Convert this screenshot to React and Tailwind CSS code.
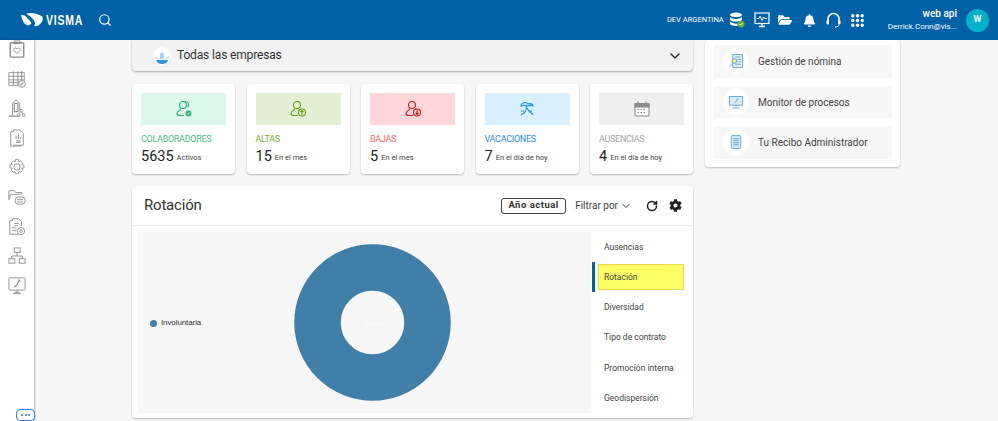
import React from "react";
import { ChevronDown, RotateCw, Search } from "lucide-react";
import { FaBell, FaCog, FaFolderOpen } from "react-icons/fa";

const Logo = () => (
  <svg width="22" height="14" viewBox="0 0 22 14" className="block">
    <path d="M0 2.500C2 1.500 4 2.500 5.500 4C7.500 6 9 8 10.500 10C9.500 12 7.500 13 5.500 12C2.500 10.500 1 6 0 2.500Z" fill="#fff" />
    <path d="M5 .8C9-.6 15 0 20.500 3C22.500 4.500 22 7 20.500 9.500C18.500 12.500 15.500 13.800 13 13C14.500 11.500 14.500 9.500 13 7.500C11 4.800 8 2.200 5 .8Z" fill="#fff" />
  </svg>
);

const Db = () => (
  <svg width="16" height="16" viewBox="0 0 16 16">
    <ellipse cx="7" cy="2.800" rx="6" ry="2.300" fill="#fff" />
    <path d="M1 5v2.400c0 1.200 2.700 2.200 6 2.200s6-1 6-2.200V5c-1 1.200-3.400 1.900-6 1.900S2 6.200 1 5Z" fill="#fff" />
    <path d="M1 9.300v2.500c0 1.200 2.700 2.200 6 2.200 .6 0 1 0 1.500-.1v-2.300c-3 .3-6.300-.5-7.500-2.300Z" fill="#fff" />
    <circle cx="12" cy="12" r="3.500" fill="#5fb233" />
    <path d="M10.500 12l1.100 1.100 2-2.100" fill="none" stroke="#fff" strokeWidth="1" />
  </svg>
);

const Pulse = () => (
  <svg width="16" height="16" viewBox="0 0 16 16" fill="none" stroke="#fff">
    <rect x="1" y="1" width="14" height="10.500" strokeWidth="1.200" />
    <path d="M2.500 6.500h2.500l1.200-2.500 1.800 4.500 1.500-3.500 1 1.500h2.500" strokeWidth=".9" />
    <path d="M5 14.500h6M8 11.500v3" strokeWidth="1.400" />
  </svg>
);

const Headset = () => (
  <svg width="15" height="16" viewBox="0 0 15 16" fill="none">
    <path d="M2 9V7a5.500 5.500 0 0 1 11 0v2" stroke="#fff" strokeWidth="1.500" />
    <rect x=".5" y="8" width="2.500" height="4.500" rx="1" fill="#fff" />
    <rect x="12" y="8" width="2.500" height="4.500" rx="1" fill="#fff" />
    <path d="M13 12.500c0 1.500-1.500 2.500-4 2.500" stroke="#fff" />
  </svg>
);

const AppsGrid = () => (
  <svg width="13" height="13" viewBox="0 0 13 13" fill="#fff">
    {[1.800, 6.500, 11.200].map((y) =>
      [1.800, 6.500, 11.200].map((x) => <circle key={`${x}-${y}`} cx={x} cy={y} r="1.700" />)
    )}
  </svg>
);

// gray line icons of the left rail
const railPaths = [
  <g key="a"><rect x="2.500" y="3" width="15" height="16" rx="1" strokeWidth="1.500" /><rect x="7" y="1" width="6" height="3" /><path d="M10 15l-3.500-3.500c-1-2 2-4 3.500-1.500 1.500-2.500 4.500-.5 3.500 1.500Z" /></g>,
  <g key="b"><rect x="1" y="3" width="17" height="14" /><path d="M1 7h17M1 11h17M1 14h12M6 1v16M11 1v16M15 1v10" /><circle cx="15.500" cy="15.500" r="3.700" fill="#fff" /><path d="M14 17l3-3" strokeWidth="1.400" /></g>,
  <g key="c"><path d="M5 18V5l3-3.500h2l3 3.500v8" /><path d="M7 5h4v9H7zM1 19h11" strokeWidth="1.200" /><circle cx="14.500" cy="13" r="1.500" /><circle cx="12" cy="18" r="1.500" /><circle cx="17.500" cy="18" r="1.500" /><path d="M13.500 14.500l-1 2M15.500 14.500l1 2" /></g>,
  <g key="d"><path d="M6 3V1h7l4 4v13H6" /><path d="M6 3H3v16h11v-1" /><path d="M9 8v3M11.500 6v5M14 9v2M9 13h5M9 15h5" strokeWidth="1.200" /></g>,
  <g key="e"><circle cx="10" cy="10" r="3.500" /><path d="M8.500 1.500h3l.5 2.500 2-.9 2.300 2.200-1.100 2.100 2.500.6v3l-2.500.6 1.100 2.100-2.300 2.200-2-1-.5 2.600h-3l-.6-2.600-2 1-2.200-2.200 1-2.100-2.500-.6v-3l2.500-.6-1-2.100 2.200-2.200 2 .9Z" /></g>,
  <g key="f"><path d="M1 13V3h6l1.500 2h7v2" /><path d="M1 13l2-6h12" /><rect x="8" y="10" width="11" height="8" rx="3.500" fill="#fff" /><path d="M10 13h7M10 15.500h7" /></g>,
  <g key="g"><path d="M5 3V1h7l3 3v5" /><path d="M5 3H2v15h10" /><path d="M7 6h5M7 8.500h4M4.500 11h5M4.500 14h5" /><circle cx="14.500" cy="14.500" r="4" fill="#fff" /><circle cx="14.500" cy="14.500" r="1.500" /></g>,
  <g key="h"><rect x="7" y="1" width="6.500" height="5" /><rect x="1" y="13" width="6.500" height="5" /><rect x="12.500" y="13" width="6.500" height="5" /><path d="M10 6v4M4 13v-3h12v3" /></g>,
  <g key="i"><rect x="1" y="1" width="18" height="13.500" rx="1" /><path d="M7 11c2-1 4-4 5.500-7.500l1 1.500" strokeWidth="1.400" /><path d="M10 14.500v2.500M6 18.500h8l-2-1.500H8Z" /></g>,
];

const Stat = ({ panel, iconColor, labelColor, label, value, note, icon }) => (
  <div className="bg-white rounded-sm shadow-[0_1px_2px_rgba(0,0,0,0.25)] px-[9px] pt-[9px] h-[90px]">
    <div className={`${panel} h-[32px] flex items-center justify-center`}>
      <svg width="18" height="18" viewBox="0 0 18 18" fill="none" stroke={iconColor} strokeWidth="1.100">
        {icon}
      </svg>
    </div>
    <div className={`${labelColor} text-[9px] tracking-[-0.3px] leading-[14px] mt-[7px] whitespace-nowrap`}>{label}</div>
    <div className="flex items-baseline whitespace-nowrap leading-[20px] mt-px">
      <span className="text-[#252525] text-[14.500px] mr-[3px]">{value}</span>
      <span className="text-[#444] text-[7.500px] relative -top-[1px]">{note}</span>
    </div>
  </div>
);

const person = (
  <>
    <circle cx="8" cy="5" r="3.500" />
    <path d="M6 8.500c0 1.500-4 2.500-4 5 0 1.500 1.500 2 3 2h4" />
  </>
);

const stats = [
  {
    panel: "bg-[#dcf7eb]", iconColor: "#2fb57c", labelColor: "text-[#4dbb8c]", label: "COLABORADORES", value: "5635", note: "Activos",
    icon: (
      <>
        {person}
        <path d="M9.500 1.800c3-1 5.500 2 3 5.500" />
        <circle cx="13.500" cy="13.500" r="3" fill="#2fb57c" stroke="none" />
        <path d="M12 13.500l1 1 2-2" stroke="#fff" strokeWidth=".9" />
      </>
    ),
  },
  {
    panel: "bg-[#e3f0d5]", iconColor: "#6aa313", labelColor: "text-[#7cae2f]", label: "ALTAS", value: "15", note: "En el mes",
    icon: <>{person}<circle cx="13" cy="12.500" r="3.500" /><path d="M13 15v-4.500M11.500 12l1.500-1.500 1.500 1.500" /></>,
  },
  {
    panel: "bg-[#ffd6da]", iconColor: "#d5121e", labelColor: "text-[#ec6a6a]", label: "BAJAS", value: "5", note: "En el mes",
    icon: <>{person}<circle cx="13" cy="12.500" r="3.500" /><path d="M13 10v4.500M11.500 13l1.500 1.500 1.500-1.500" /></>,
  },
  {
    panel: "bg-[#d9f0ff]", iconColor: "#1e90dc", labelColor: "text-[#2f8fd0]", label: "VACACIONES", value: "7", note: "En el día de hoy",
    icon: (
      <>
        <path d="M3 6c0-3 5-5 7-2 2-1 5 0 5 2-2-1-3-1-5 0-2-1-4-1-7 0Z" />
        <path d="M8 5c1 3 0 6-2 8-1 1-2 1-3 2M9 8c1 2 2 3 3 4 1 1 2 1 3 3M3 11h3M11 11h3" />
      </>
    ),
  },
  {
    panel: "bg-[#efefef]", iconColor: "#8c8c8c", labelColor: "text-[#a3a3a3]", label: "AUSENCIAS", value: "4", note: "En el día de hoy",
    icon: <><rect x="2" y="3.500" width="14" height="12.500" rx="1" fill="#fff" /><path d="M2 3.500h14V7H2Z" fill="#8c8c8c" /><path d="M5 1.500v3M13 1.500v3M4.500 9.500h9M4.500 12.500h9" strokeDasharray="1.500 1.500" /></>,
  },
];

const shortcuts = [
  {
    label: "Gestión de nómina",
    icon: <><rect x="6" y="2" width="12" height="16" fill="#e4f1fa" /><path d="M9 5h7M12 8h4M12 11h4M9 14h7" /><circle cx="8" cy="10" r="3" fill="#f7e9a0" /><path d="M6 12l-4 5" /></>,
  },
  {
    label: "Monitor de procesos",
    icon: <><rect x="2" y="3" width="16" height="11" fill="#d6eaf8" /><path d="M8 11c2-1 3-3 4-5l1 1M10 14v2M6 17.500h8" /></>,
  },
  {
    label: "Tu Recibo Administrador",
    icon: <><rect x="4" y="2" width="12" height="16" rx="1.500" fill="#d6eaf8" /><path d="M6.500 6h7M6.500 8.500h7M6.500 11h7M6.500 13.500h7" /></>,
  },
];

const tabs = ["Ausencias", "Rotación", "Diversidad", "Tipo de contrato", "Promoción interna", "Geodispersión"];

export default function App() {
  return (
    <div className="relative w-[998px] h-[421px] overflow-hidden flex flex-col bg-[#f7f7f7] font-['Roboto',sans-serif]">
      <header className="h-[40px] shrink-0 bg-[#0061a6] flex items-center pl-[21px] pr-[9px] text-white">
        <Logo />
        <span className="ml-[3px] w-[38px] text-[14px] font-bold tracking-[1px] whitespace-nowrap font-['Liberation_Sans',sans-serif] scale-x-75 origin-left">VISMA</span>
        <Search size={14} strokeWidth={2} className="ml-[14px]" />
        <div className="ml-auto flex items-center">
          <span className="text-[7.500px] mr-[5px] whitespace-nowrap">DEV ARGENTINA</span>
          <Db />
          <span className="ml-[9px]"><Pulse /></span>
          <FaFolderOpen size={14} className="ml-[8px]" />
          <FaBell size={13} className="ml-[11px]" />
          <span className="ml-[10px]"><Headset /></span>
          <span className="ml-[10px]"><AppsGrid /></span>
          <div className="ml-[24px] text-right leading-none">
            <div className="text-[10px] font-medium">web api</div>
            <div className="text-[8px] mt-[4px] whitespace-nowrap">Derrick.Conn@vis...</div>
          </div>
          <div className="ml-[9px] w-[23px] h-[23px] rounded-full bg-[#03b2c9] flex items-center justify-center text-[9px] font-semibold">W</div>
        </div>
      </header>

      <div className="flex flex-1 min-h-0">
        <aside className="w-[34px] shrink-0 bg-white shadow-[1px_0_2px_rgba(0,0,0,0.25)] overflow-hidden relative">
          <div className="flex flex-col items-center gap-[11.600px]">
            {railPaths.map((p, i) => (
              <svg key={i} width="18" height="18" viewBox="0 0 20 20" fill="none" stroke="#8d8d8d" strokeWidth="1">
                {p}
              </svg>
            ))}
          </div>
        </aside>

        <main className="flex-1 pl-[98px] flex items-start gap-[12px] overflow-hidden">
          <div className="w-[561px] shrink-0">
            <div className="h-[31px] bg-[#f2f2f2] rounded-b-sm shadow-[0_1px_2px_rgba(0,0,0,0.3)] flex items-center pl-[21px] pr-[10px]">
              <span className="w-[18px] h-[18px] rounded-full bg-white flex items-end justify-center overflow-hidden">
                <svg width="16" height="16" viewBox="0 0 16 16">
                  <path d="M6 10V5l2-2 2 2v5Z" fill="#a9d3ee" />
                  <path d="M1 8l4 2M15 8l-4 2" stroke="#a9d3ee" />
                  <path d="M2 11h12c-1 3-3 4-6 4s-5-1-6-4Z" fill="#2f93d6" />
                </svg>
              </span>
              <span className="ml-[6px] text-[12px] tracking-[-0.15px] text-[#333] -mt-[2px] whitespace-nowrap">Todas las empresas</span>
              <ChevronDown size={16} strokeWidth={2} className="ml-auto text-[#222]" />
            </div>

            <div className="grid grid-cols-5 gap-[11.500px] mt-[13px]">
              {stats.map((s) => (
                <Stat key={s.label} {...s} />
              ))}
            </div>

            <section className="mt-[12px] h-[232px] bg-white rounded-sm shadow-[0_1px_2px_rgba(0,0,0,0.25)]">
              <div className="h-[40px] border-b border-[#eeeeee] flex items-center pl-[12px] pr-[11px]">
                <span className="text-[15px] tracking-[-0.2px] text-[#333]">Rotación</span>
                <span className="ml-auto border border-[#444] rounded-[3px] h-[16px] w-[65px] flex items-center justify-center text-[9.500px] font-bold tracking-[0.5px] text-[#333] whitespace-nowrap">Año actual</span>
                <span className="ml-[9px] text-[10px] text-[#444] whitespace-nowrap">Filtrar por</span>
                <ChevronDown size={12} className="ml-[2px] text-[#333]" />
                <RotateCw size={12} strokeWidth={3} className="ml-[14px] text-[#222]" />
                <FaCog size={13} className="ml-[11px] text-[#222]" />
              </div>
              <div className="flex h-[192px]">
                <div className="ml-[6px] mt-[6px] w-[453px] h-[181px] bg-[#f7f7f7] relative flex items-center justify-center pl-[16px]">
                  <div className="absolute left-[12px] top-[85px] flex items-center gap-[4px] font-['Liberation_Sans',sans-serif] text-[8px] tracking-[-0.1px] text-[#333]">
                    <span className="w-[7px] h-[7px] rounded-full bg-[#4080a8]" />
                    Involuntaria
                  </div>
                  <svg width="157" height="157" viewBox="0 0 157 157">
                    <circle cx="78.500" cy="78.500" r="55" fill="none" stroke="#4080a8" strokeWidth="46.500" />
                    <text x="78.500" y="81.500" textAnchor="middle" fontSize="8" fill="#ffffff" fontFamily="Liberation Sans">100%</text>
                  </svg>
                </div>
                <nav className="flex-1 flex flex-col pl-[1px] mt-[6px]">
                  {tabs.map((t) => {
                    const on = t === "Rotación";
                    return (
                      <div key={t} className="h-[30.100px] flex items-center">
                        <span className={`w-[3px] h-[30px] mr-[3px] ${on ? "bg-[#0061a6]" : ""}`} />
                        <span className={`h-[26px] w-[86px] pl-[5px] pt-[1px] flex items-center text-[8.500px] text-[#444] whitespace-nowrap ${on ? "bg-[#ffff66] border border-[#ecd94f]" : "border border-transparent"}`}>
                          {t}
                        </span>
                      </div>
                    );
                  })}
                </nav>
              </div>
            </section>
          </div>

          <div className="w-[195px] shrink-0 h-[127px] bg-white rounded-sm shadow-[0_1px_2px_rgba(0,0,0,0.25)] pl-[9px] pr-[8px] pt-[5px] flex flex-col gap-[8px]">
            {shortcuts.map((s) => (
              <div key={s.label} className="h-[32.500px] bg-[#f7f7f7] flex items-center pl-[9px]">
                <span className="w-[26px] h-[26px] rounded-full bg-white flex items-center justify-center shrink-0">
                  <svg width="16" height="16" viewBox="0 0 20 20" fill="none" stroke="#4e9bd2" strokeWidth="1">
                    {s.icon}
                  </svg>
                </span>
                <span className="ml-[9px] mt-[1px] text-[10px] text-[#444] whitespace-nowrap">{s.label}</span>
              </div>
            ))}
          </div>
        </main>
      </div>

      <div className="absolute left-[16px] top-[409px] w-[19px] h-[12px] bg-white border-[1.500px] border-[#2f80ed] rounded-[4px] flex items-center justify-center gap-[1.500px]">
        <span className="w-[2px] h-[2px] rounded-full bg-[#2f6fd0]" />
        <span className="w-[2px] h-[2px] rounded-full bg-[#2f6fd0]" />
        <span className="w-[2px] h-[2px] rounded-full bg-[#2f6fd0]" />
      </div>
    </div>
  );
}
